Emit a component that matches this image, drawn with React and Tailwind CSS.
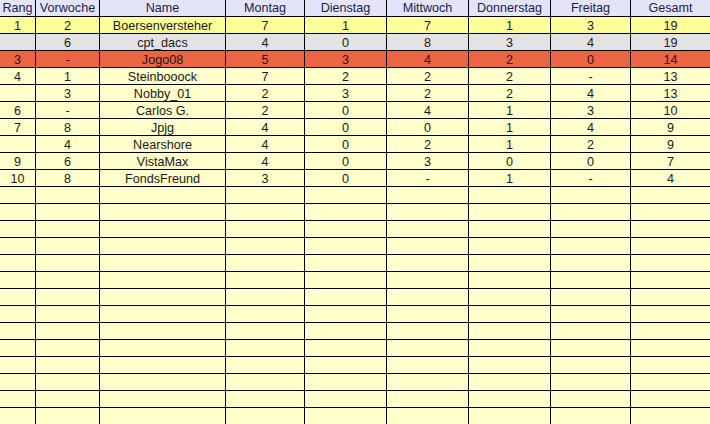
const columns = [
  "Rang",
  "Vorwoche",
  "Name",
  "Montag",
  "Dienstag",
  "Mittwoch",
  "Donnerstag",
  "Freitag",
  "Gesamt",
];

const rows = [
  ["1", "2", "Boersenversteher", "7", "1", "7", "1", "3", "19"],
  ["", "6", "cpt_dacs", "4", "0", "8", "3", "4", "19"],
  ["3", "-", "Jogo08", "5", "3", "4", "2", "0", "14"],
  ["4", "1", "Steinbooock", "7", "2", "2", "2", "-", "13"],
  ["", "3", "Nobby_01", "2", "3", "2", "2", "4", "13"],
  ["6", "-", "Carlos G.", "2", "0", "4", "1", "3", "10"],
  ["7", "8", "Jpjg", "4", "0", "0", "1", "4", "9"],
  ["", "4", "Nearshore", "4", "0", "2", "1", "2", "9"],
  ["9", "6", "VistaMax", "4", "0", "3", "0", "0", "7"],
  ["10", "8", "FondsFreund", "3", "0", "-", "1", "-", "4"],
];

const TOTAL_ROWS = 24;

const rowColor = (i) => {
  if (i === 0) return "bg-[#ffff99]";
  if (i === 1) return "bg-[#e3e3e3]";
  if (i === 2) return "bg-[#ec6442]";
  return "bg-[#ffffcc]";
};

export default function App() {
  const filled = Array.from({ length: TOTAL_ROWS }, (_, i) => rows[i] || Array(9).fill(""));

  return (
    <div className="w-[710px] h-[424px] overflow-hidden bg-white font-['Liberation_Sans',Arial,sans-serif] text-[12.6px] leading-[16px]">
      <div className="grid grid-cols-[35px_63px_125px_78px_81px_81px_81px_79px_79px] auto-rows-[16px] gap-px bg-black">
        {columns.map((c) => (
          <div key={c} className="bg-[#e4e4f8] text-center text-[#1c1c50] whitespace-nowrap">
            {c}
          </div>
        ))}
        {filled.map((row, i) =>
          row.map((cell, j) => (
            <div key={`${i}-${j}`} className={`${rowColor(i)} text-center text-[#1a1a1a] whitespace-nowrap pt-px`}>
              {cell}
            </div>
          ))
        )}
      </div>
    </div>
  );
}
